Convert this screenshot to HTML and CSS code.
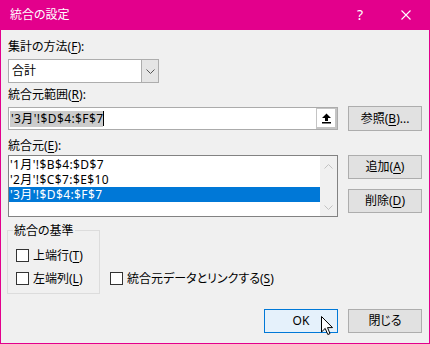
FILE: index.html
```html
<!DOCTYPE html>
<html lang="ja">
<head>
    <meta charset="UTF-8">
    <title>統合の設定</title>
    <link rel="stylesheet" href="styles.css">
</head>
<body>
    <div class="dialog">
        <div class="titlebar">
            <span class="title">統合の設定</span>
            <span class="tb-btn help">?</span>
            <span class="tb-btn">
                <svg width="10" height="10" viewBox="0 0 10 10"><path d="M0.5 0.5 L9.5 9.5 M9.5 0.5 L0.5 9.5" stroke="#fff" stroke-width="1.1" fill="none"/></svg>
            </span>
        </div>

        <div class="content">
            <div class="lbl">集計の方法(<u>F</u>):</div>
            <div class="combo">
                <span class="combo-text">合計</span>
                <span class="drop">
                    <svg width="9" height="5" viewBox="0 0 9 5"><path d="M0.5 0.5 L4.5 4.5 L8.5 0.5" stroke="#555" fill="none"/></svg>
                </span>
            </div>

            <div class="lbl lbl-range">統合元範囲(<u>R</u>):</div>
            <div class="ref-row">
                <div class="refbox">
                    <span class="sel">'3月'!$D$4:$F$7</span><span class="caret"></span>
                    <span class="collapse">
                        <svg width="11" height="11" viewBox="0 0 11 11"><path d="M5.5 0.5 L10 5 L7 5 L7 8 L4 8 L4 5 L1 5 Z" fill="#000"/><rect x="1" y="9" width="9" height="1.5" fill="#000"/></svg>
                    </span>
                </div>
                <button class="btn">参照(<u>B</u>)...</button>
            </div>

            <div class="lbl lbl-src">統合元(<u>E</u>):</div>
            <div class="list-row">
                <div class="listbox">
                    <div class="items">
                        <div class="item">'1月'!$B$4:$D$7</div>
                        <div class="item">'2月'!$C$7:$E$10</div>
                        <div class="item selected">'3月'!$D$4:$F$7</div>
                    </div>
                    <div class="scrollbar">
                        <svg width="9" height="5" viewBox="0 0 9 5"><path d="M0.5 4.5 L4.5 0.5 L8.5 4.5" stroke="#c2c2c2" fill="none"/></svg>
                        <svg width="9" height="5" viewBox="0 0 9 5"><path d="M0.5 0.5 L4.5 4.5 L8.5 0.5" stroke="#c2c2c2" fill="none"/></svg>
                    </div>
                </div>
                <div class="side">
                    <button class="btn">追加(<u>A</u>)</button>
                    <button class="btn">削除(<u>D</u>)</button>
                </div>
            </div>

            <div class="opts">
                <div class="group">
                    <div class="group-title">統合の基準</div>
                    <label class="chk first"><span class="box"></span><span>上端行(<u>T</u>)</span></label>
                    <label class="chk"><span class="box"></span><span>左端列(<u>L</u>)</span></label>
                </div>
                <label class="chk link"><span class="box"></span><span>統合元データとリンクする(<u>S</u>)</span></label>
            </div>

            <div class="footer">
                <button class="btn ok">OK</button>
                <button class="btn">閉じる</button>
            </div>
        </div>

        <svg class="cursor" width="13" height="20" viewBox="0 0 13 20">
            <path d="M0.5 0.5 L0.5 16 L4.2 12.4 L6.8 18.5 L9 17.6 L6.5 11.6 L11.5 11.6 Z" fill="#fff" stroke="#000" stroke-width="1" stroke-linejoin="miter"/>
        </svg>
    </div>
</body>
</html>
```

FILE: styles.css
```css
* {
    margin: 0;
    padding: 0;
    box-sizing: border-box;
}

body {
    font-family: "Noto Sans", "Noto Sans CJK JP", sans-serif;
    font-size: 12px;
    line-height: 16px;
    color: #000;
    background: #f0f0f0;
    font-feature-settings: "palt";
}

u {
    text-decoration-thickness: 1px;
    text-underline-offset: 2px;
}

.dialog {
    position: relative;
    width: 430px;
    height: 344px;
    background: #f0f0f0;
    border: 1px solid #e3008c;
    border-top: 0;
}

.titlebar {
    height: 30px;
    display: flex;
    align-items: center;
    background: #e3008c;
    color: #fff;
}

.title {
    padding-left: 9px;
    margin-right: auto;
}

.tb-btn {
    width: 46px;
    height: 30px;
    display: flex;
    align-items: center;
    justify-content: center;
}

.help {
    font-size: 14px;
}

.content {
    padding: 9px 7px 0 7px;
}

.lbl {
    height: 16px;
}

.combo {
    margin-top: 4px;
    width: 151px;
    height: 24px;
    display: flex;
    background: #fff;
    border: 1px solid #adadad;
}

.combo-text {
    padding: 3px 0 0 3px;
}

.drop {
    margin-left: auto;
    width: 17px;
    display: flex;
    align-items: center;
    justify-content: center;
    background: #e5e5e5;
    border-left: 1px solid #adadad;
}

.lbl-range {
    margin-top: 4px;
}

.ref-row {
    margin-top: 3px;
    display: flex;
    align-items: center;
    gap: 10px;
    height: 25px;
}

.refbox {
    width: 331px;
    height: 23px;
    display: flex;
    align-items: center;
    background: #fff;
    border: 1px solid #ababab;
    padding-left: 1px;
}

.sel {
    background: #cccccc;
    padding: 0 0 0 1px;
    letter-spacing: 0.4px;
}

.caret {
    width: 1px;
    height: 15px;
    background: #000;
}

.collapse {
    margin-left: auto;
    width: 21px;
    height: 21px;
    display: flex;
    align-items: center;
    justify-content: center;
    background: #fff;
    border: 2px solid #c4c4c4;
    border-left-width: 1px;
    border-top-width: 1px;
}

.btn {
    width: 74px;
    height: 24px;
    font: inherit;
    font-feature-settings: "palt";
    color: #000;
    background: #e1e1e1;
    border: 1px solid #adadad;
}

.ref-row .btn {
    height: 25px;
}

.lbl-src {
    margin-top: 7px;
}

.list-row {
    margin-top: 1px;
    display: flex;
    gap: 10px;
}

.listbox {
    width: 331px;
    height: 62px;
    display: flex;
    background: #fff;
    border: 1px solid #828282;
}

.items {
    flex: 1;
    padding-top: 1px;
}

.item {
    height: 15px;
    line-height: 15px;
    padding-left: 1px;
    letter-spacing: 0.4px;
}

.selected {
    background: #0078d7;
    color: #fff;
}

.scrollbar {
    width: 17px;
    display: flex;
    flex-direction: column;
    align-items: center;
    justify-content: space-between;
    padding: 8px 0 6px;
    background: #f0f0f0;
}

.side {
    display: flex;
    flex-direction: column;
    gap: 10px;
}

.opts {
    margin-top: 13px;
    display: flex;
    align-items: flex-end;
}

.group {
    margin-left: -1px;
    width: 93px;
    border: 1px solid #dcdcdc;
    padding: 0 0 7px 8px;
}

.group-title {
    margin: -8px 0 0 -3px;
    width: fit-content;
    padding: 0 1px;
    background: #f0f0f0;
}

.chk {
    height: 15px;
    display: flex;
    align-items: center;
    gap: 4px;
}

.chk.first {
    margin-top: 9px;
}

.chk + .chk {
    margin-top: 8px;
}

.box {
    width: 13px;
    height: 13px;
    background: #fff;
    border: 1px solid #333;
}

.link {
    margin: 0 0 8px 10px;
}

.footer {
    margin-top: 15px;
    display: flex;
    justify-content: flex-end;
    gap: 10px;
}

.ok {
    background: #e5f1fb;
    border-color: #0078d7;
}

.cursor {
    position: absolute;
    left: 320px;
    top: 316px;
}
```
